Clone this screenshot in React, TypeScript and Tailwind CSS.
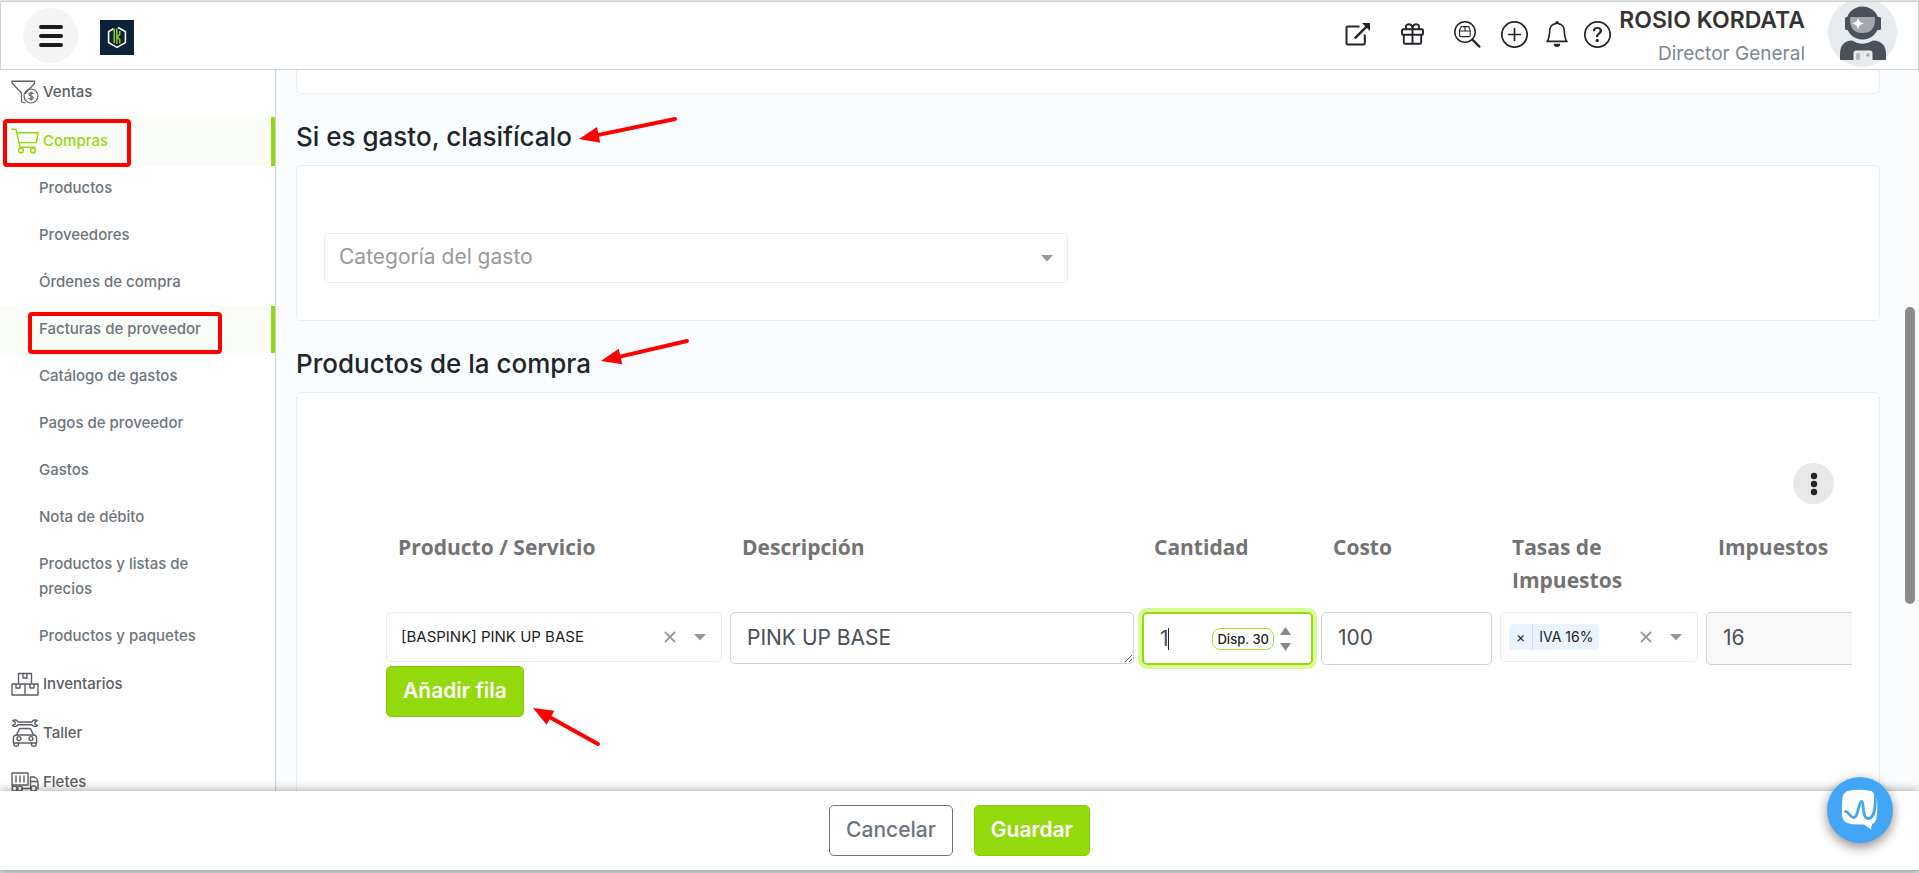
import { useState } from 'react';
import type { ReactNode } from 'react';
import { BsBell, BsPlusCircle, BsQuestionCircle } from 'react-icons/bs';

const SUB_ITEMS = [
  'Productos',
  'Proveedores',
  'Órdenes de compra',
  'Facturas de proveedor',
  'Catálogo de gastos',
  'Pagos de proveedor',
  'Gastos',
  'Nota de débito',
  'Productos y listas de precios',
  'Productos y paquetes',
];

function VentasIcon() {
  return (
    <svg width="28" height="24" viewBox="0 0 28 24" fill="none" stroke="currentColor" strokeWidth="1.2" strokeLinejoin="round" strokeLinecap="round">
      <path d="M14 13.5 L23.5 3.5 V1 H1 V3 L10.5 13 V22 L14 23" />
      <path d="M1 1.5 H23.5" />
      <circle cx="20" cy="16" r="7" />
      <path d="M22 13.6 C21 12.6 18 12.6 18 14.4 C18 16.3 22.2 15.6 22.2 17.7 C22.2 19.4 19 19.5 17.8 18.4 M20 11.8 V20.2" />
    </svg>
  );
}

function CartIcon() {
  return (
    <svg width="28" height="26" viewBox="0 0 28 26" fill="none" stroke="currentColor" strokeWidth="1.4" strokeLinejoin="round" strokeLinecap="round">
      <path d="M0.8 1.2 H5 L9 19.2 H24" />
      <path d="M5.8 4.8 H27 L25.4 14.6 H8" />
      <circle cx="10" cy="22.4" r="2.4" />
      <circle cx="22" cy="22.4" r="2.4" />
    </svg>
  );
}

function BoxesIcon() {
  return (
    <svg width="28" height="24" viewBox="0 0 28 24" fill="none" stroke="currentColor" strokeWidth="1.4" strokeLinejoin="round">
      <path d="M7.5 11.5 V1.5 H20.5 V11.5" />
      <path d="M1 12 H27 V23 H1 Z M14 12 V23" />
      <path d="M12 1.5 V6 H16 V1.5 M5 12 V16 H9 V12 M19 12 V16 H23 V12" />
    </svg>
  );
}

function TallerIcon() {
  return (
    <svg width="28" height="28" viewBox="0 0 28 28" fill="none" stroke="currentColor" strokeWidth="1.4" strokeLinejoin="round" strokeLinecap="round">
      <path d="M7 3 H21 C22 0.8 24.6 0.4 26.2 1.6 L23.8 3.4 V5 L26.4 6.4 C24.8 8 22 7.6 21 5.8 H7 C6 7.6 3.2 8 1.6 6.4 L4.2 5 V3.4 L1.8 1.6 C3.4 0.4 6 0.8 7 3 Z" />
      <path d="M5.5 16 L8 10.6 C8.4 9.8 9 9.5 9.8 9.5 H18.2 C19 9.5 19.6 9.8 20 10.6 L22.5 16" />
      <path d="M5.5 16 H22.5 C24.4 16 25.6 17.4 25.6 19.4 V24 H2.4 V19.4 C2.4 17.4 3.6 16 5.5 16 Z" />
      <path d="M3 24 V26 C3 27.6 7.4 27.6 7.4 26 V24 M20.6 24 V26 C20.6 27.6 25 27.6 25 26 V24" />
      <circle cx="8" cy="19.6" r="2" />
      <circle cx="20" cy="19.6" r="2" />
    </svg>
  );
}

function TruckIcon() {
  return (
    <svg width="28" height="20" viewBox="0 0 28 20" fill="none" stroke="currentColor" strokeWidth="1.4" strokeLinejoin="round" strokeLinecap="round">
      <path d="M1 14 V1 H17 V13 H1" />
      <path d="M5 4 V10 M9 4 V10 M13 4 V10" />
      <path d="M19.5 16.5 V5 H23 C25.5 5.5 27 8.5 27 11 V16.5 H25.5 M19.5 9.5 H26.4 M10.5 16.5 H19.5" />
      <circle cx="3.6" cy="16.6" r="2.5" />
      <circle cx="9" cy="16.6" r="2.5" />
      <circle cx="22.6" cy="16.6" r="2.7" />
    </svg>
  );
}

function ExternalIcon() {
  return (
    <svg width="26" height="24" viewBox="0 0 26 24" fill="none" stroke="currentColor" strokeWidth="2">
      <path d="M14.5 4.5 H2.8 Q1.5 4.5 1.5 5.8 V21 Q1.5 22.5 2.8 22.5 H18.5 Q19.8 22.5 19.8 21 V12.5" />
      <path d="M9.8 16.4 L23 3.2" strokeWidth="2.4" />
      <path d="M17 1 H25 V9 Z" fill="currentColor" stroke="none" />
    </svg>
  );
}

function GiftIcon() {
  return (
    <svg width="23" height="22" viewBox="0 0 23 22" fill="none" stroke="currentColor" strokeWidth="1.9" strokeLinejoin="round">
      <rect x="1" y="6.2" width="21" height="5.6" rx="1" />
      <path d="M2.8 11.8 V19.4 Q2.800 20.800 4.200 20.800 H18.800 Q20.200 20.800 20.200 19.400 V11.800" />
      <path d="M11.500 6.200 V20.800" />
      <path d="M11.500 6 C11.500 3 9.800 1.200 7.600 1.200 C4.600 1.200 4 4.400 6 6 M11.500 6 C11.500 3 13.200 1.200 15.400 1.200 C18.400 1.200 19 4.400 17 6" />
    </svg>
  );
}

function ProductSearchIcon() {
  return (
    <svg width="28" height="28" viewBox="0 0 28 28" fill="none" stroke="currentColor" strokeWidth="1.5" strokeLinecap="round">
      <circle cx="12" cy="12" r="10.2" />
      <path d="M19.4 19.6 L26.4 26.6" strokeWidth="2.2" />
      <path d="M6.6 10 L8.4 6.6 H15.6 L17.2 10 V15.2 Q17.2 16.6 15.8 16.6 H8 Q6.6 16.6 6.6 15.2 Z M6.6 11 H17.2 M12 6.6 V11" strokeWidth="1.1" />
    </svg>
  );
}

function Logo() {
  return (
    <svg width="34" height="35" viewBox="0 0 34 35" className="mt-1 ml-[22px]" role="img" aria-label="Kordata">
      <rect width="34" height="35" fill="#0b2239" />
      <path d="M13.500 8.800 L8.600 11.600 V22.600 L17 27.400 L25.400 22.600 V11.600 L18 7.500" fill="none" stroke="#fff" strokeWidth="1.6" strokeLinejoin="round" />
      <path d="M14.200 8.500 V23 M16.800 8.500 V24 M17 17 L19.800 14.400 V11 M17 17 L19.800 19.400 V23.400" fill="none" stroke="#8fce1c" strokeWidth="1.5" />
    </svg>
  );
}

function Avatar() {
  return (
    <svg width="69" height="65" viewBox="0 0 69 65" className="ml-[23px] self-start" role="img" aria-label="Avatar">
      <circle cx="34.5" cy="30.5" r="34.5" fill="#e7ebee" />
      <circle cx="34.5" cy="21" r="16.5" fill="#49515a" />
      <rect x="17" y="15" width="36" height="13" rx="1.5" fill="#49515a" />
      <path d="M23 15 H46 Q47 15 47 17 Q47 31 34.5 31 Q22 31 22 17 Q22 15 23 15 Z" fill="#a3a8ad" />
      <path d="M30 15.5 Q30.6 20.4 36 21.5 Q30.6 22.2 30 27.5 Q29.4 22.2 24 21.5 Q29.4 20.4 30 15.5 Z" fill="#fff" />
      <path d="M12 58 V52 Q12 39 24 38.5 Q34.5 45 45 38.5 Q58 39 58 52 V58 Z" fill="#49515a" />
      <path d="M25.5 58 V51 Q25.5 48.5 28 48.5 H42 Q44.5 48.5 44.5 51 V58 Z" fill="#e7ebee" />
      <rect x="28" y="51" width="4" height="7" rx="1.5" fill="#b4b9bd" />
      <circle cx="40" cy="53" r="1.8" fill="#a3a8ad" />
    </svg>
  );
}

function Caret() {
  return (
    <svg width="12" height="7" viewBox="0 0 12 7" className="pointer-events-none shrink-0">
      <path d="M0 0 H12 L6 6.5 Z" fill="#999" />
    </svg>
  );
}

function ClearIcon() {
  return (
    <svg width="12" height="12" viewBox="0 0 12 12" stroke="#999" strokeWidth="1.8">
      <path d="M1 1 L11 11 M11 1 L1 11" />
    </svg>
  );
}

// Hand drawn arrow that points at an element of the form
function Arrow({ className, width, height, from, to }: {
  className: string;
  width: number;
  height: number;
  from: [number, number];
  to: [number, number];
}) {
  const angle = Math.atan2(to[1] - from[1], to[0] - from[0]);
  const at = (d: number, side: number) => {
    const x = to[0] - Math.cos(angle) * d - Math.sin(angle) * side;
    const y = to[1] - Math.sin(angle) * d + Math.cos(angle) * side;
    return `${x},${y}`;
  };
  const [bx, by] = at(14, 0).split(',');

  return (
    <svg className={`absolute pointer-events-none z-10 ${className}`} width={width} height={height} fill="#f00" aria-hidden="true">
      <line x1={from[0]} y1={from[1]} x2={bx} y2={by} stroke="#f00" strokeWidth="4" strokeLinecap="round" />
      <polygon points={`${to[0]},${to[1]} ${at(20, 8)} ${at(20, -8)}`} />
    </svg>
  );
}

function NavItem({ icon, label, active }: { icon: ReactNode; label: string; active?: boolean }) {
  return (
    <a
      href="#"
      className={`relative flex h-[49px] items-start pt-[11px] pl-[11px] leading-[25px] font-medium ${
        active ? 'bg-[#fafdf7] border-r-4 border-[#94d90c] text-[#94d90c]' : 'text-[#5b5e63]'
      }`}
    >
      <span className="flex h-[26px] w-8 shrink-0 items-center">{icon}</span>
      {label}
      {active && <span className="absolute top-0.5 left-[3px] h-12 w-32 rounded-sm border-4 border-[#f00]" />}
    </a>
  );
}

function Sidebar() {
  return (
    <nav className="w-[276px] shrink-0 overflow-hidden border-r border-[#d0d3d6] bg-white text-[15px]">
      <div className="-mt-0.5">
        <NavItem icon={<VentasIcon />} label="Ventas" />
        <NavItem icon={<CartIcon />} label="Compras" active />
        <ul className="-mt-px">
          {SUB_ITEMS.map((item) => {
            const active = item === 'Facturas de proveedor';
            return (
              <li key={item} className={`relative ${active ? 'bg-[#fafdf7] border-r-4 border-[#94d90c]' : ''}`}>
                <a href="#" className="block max-w-[240px] pt-2.5 pr-6 pb-3 pl-[39px] leading-[25px] font-medium text-[#6c757d]">
                  {item}
                </a>
                {active && <span className="absolute top-1.5 left-7 h-[42px] w-[194px] rounded-sm border-4 border-[#f00]" />}
              </li>
            );
          })}
        </ul>
        <NavItem icon={<BoxesIcon />} label="Inventarios" />
        <NavItem icon={<TallerIcon />} label="Taller" />
        <NavItem icon={<TruckIcon />} label="Fletes" />
      </div>
    </nav>
  );
}

function Header() {
  return (
    <header className="flex h-[69px] shrink-0 items-center border border-[#d0d0d0] bg-white pr-[21px] pl-[22px]">
      <button type="button" aria-label="Menú" className="flex size-[55px] flex-col items-center justify-center gap-[5px] rounded-full bg-[#f4f4f4]">
        <span className="h-1 w-6 rounded-xs bg-[#1a1a1a]" />
        <span className="h-1 w-6 rounded-xs bg-[#1a1a1a]" />
        <span className="h-1 w-6 rounded-xs bg-[#1a1a1a]" />
      </button>
      <Logo />
      <div className="ml-auto flex h-16 items-center self-start text-[#212529]">
        <button type="button" aria-label="Abrir" className="mr-[30px]"><ExternalIcon /></button>
        <button type="button" aria-label="Novedades" className="mr-[29px]"><GiftIcon /></button>
        <button type="button" aria-label="Buscar producto" className="mr-5"><ProductSearchIcon /></button>
        <button type="button" aria-label="Agregar" className="mr-4"><BsPlusCircle size={27} /></button>
        <button type="button" aria-label="Notificaciones" className="mr-3.5"><BsBell size={26} /></button>
        <button type="button" aria-label="Ayuda"><BsQuestionCircle size={27} /></button>
      </div>
      <div className="ml-2 flex flex-col items-end self-start">
        <span className="text-[23px] leading-9 font-semibold text-[#333]">ROSIO KORDATA</span>
        <span className="text-[19px] leading-8 text-[#7b8794]">Director General</span>
      </div>
      <Avatar />
    </header>
  );
}

function ProductTable() {
  const [description, setDescription] = useState('PINK UP BASE');
  const [quantity, setQuantity] = useState('1');
  const [cost, setCost] = useState('100');

  return (
    <table className="w-[1499px] table-fixed border-collapse">
      <colgroup>
        <col className="w-[344px]" />
        <col className="w-[412px]" />
        <col className="w-[179px]" />
        <col className="w-[179px]" />
        <col className="w-[206px]" />
        <col className="w-[179px]" />
      </colgroup>
      <thead>
        <tr className="text-left align-top font-['Open_Sans',sans-serif] text-[21px] leading-[33px] text-[#737373]">
          <th className="h-[77px] pl-4 font-bold">Producto / Servicio</th>
          <th className="pl-4 font-bold">Descripción</th>
          <th className="pl-4 font-bold">Cantidad</th>
          <th className="pl-4 font-bold">Costo</th>
          <th className="pr-12 pl-4 font-bold">Tasas de Impuestos</th>
          <th className="pl-4 font-bold">Impuestos</th>
        </tr>
      </thead>
      <tbody>
        <tr className="align-top text-[21px] text-[#495057]">
          <td className="px-1 pt-1">
            <div className="flex h-[50px] items-center rounded-[5px] border border-[#e5effa] pr-[15px]">
              <select aria-label="Producto / Servicio" className="h-full min-w-0 flex-1 appearance-none pl-3.5 text-[15px] text-[#222] outline-none">
                <option>[BASPINK] PINK UP BASE</option>
              </select>
              <button type="button" aria-label="Quitar producto" className="mr-[18px]"><ClearIcon /></button>
              <Caret />
            </div>
          </td>
          <td className="px-1 pt-1">
            <textarea
              aria-label="Descripción"
              rows={1}
              value={description}
              onChange={(e) => setDescription(e.target.value)}
              className="block h-[52px] w-full resize overflow-hidden rounded-[5px] border border-[#ced4da] px-4 pt-2.5 leading-[30px] outline-none"
            />
          </td>
          <td className="px-1 pt-1">
            <div className="relative flex h-[53px] items-center rounded-[5px] border-2 border-[#94d90c] pr-5 shadow-[0_0_0_4px_#dafa98]">
              <input
                aria-label="Cantidad"
                type="text"
                inputMode="numeric"
                value={quantity}
                onChange={(e) => setQuantity(e.target.value)}
                className="h-full w-0 min-w-0 flex-1 pl-4 outline-none"
              />
              <span className="absolute left-6 h-[22px] w-px bg-[#212529]" />
              <span className="rounded-lg border border-[#a6e22e] px-1 text-[13px] leading-5 font-medium text-[#222]">Disp. 30</span>
              <span className="ml-1.5 flex flex-col gap-2">
                <button type="button" aria-label="Más">
                  <svg width="11" height="8" viewBox="0 0 11 8" className="block"><path d="M5.5 0 L11 8 H0 Z" fill="#8a8a8a" /></svg>
                </button>
                <button type="button" aria-label="Menos">
                  <svg width="11" height="8" viewBox="0 0 11 8" className="block"><path d="M0 0 H11 L5.5 8 Z" fill="#8a8a8a" /></svg>
                </button>
              </span>
            </div>
          </td>
          <td className="px-1 pt-1">
            <input
              aria-label="Costo"
              type="text"
              value={cost}
              onChange={(e) => setCost(e.target.value)}
              className="block h-[53px] w-full rounded-[5px] border border-[#ced4da] px-4 pb-0.5 outline-none"
            />
          </td>
          <td className="px-1 pt-1">
            <div className="flex h-[50px] items-center rounded-[5px] border border-[#e5effa] pr-[15px] pl-2">
              <span className="flex h-[26px] items-center rounded-sm bg-[#e8f3ff] text-sm leading-[26px] text-[#222]">
                <button type="button" aria-label="Quitar IVA 16%" className="h-full border-r border-[#c9e0f5] px-[7px]">×</button>
                <span className="px-1.5">IVA 16%</span>
              </span>
              <button type="button" aria-label="Quitar tasas" className="mr-[18px] ml-auto"><ClearIcon /></button>
              <button type="button" aria-label="Elegir tasas"><Caret /></button>
            </div>
          </td>
          <td className="px-1 pt-1">
            <input
              aria-label="Impuestos"
              type="text"
              readOnly
              value="16"
              className="block h-[53px] w-full rounded-[5px] border border-[#ced4da] bg-[#f8f8f8] px-4 pb-0.5 outline-none"
            />
          </td>
        </tr>
      </tbody>
    </table>
  );
}

export default function App() {
  return (
    <div className="flex h-screen flex-col overflow-hidden bg-[#dbe6e0] pt-px font-[Inter,sans-serif]">
      <Header />

      <div className="flex min-h-0 flex-1">
        <Sidebar />

        <main className="min-w-0 flex-1 overflow-hidden bg-[#fafdff] pr-[23px] pl-5">
          <div className="h-6 rounded-b-[5px] border border-t-0 border-[#e5effa] bg-white" />

          <section className="relative">
            <h2 className="pt-[25px] pb-2.5 text-[26px] leading-9 font-medium text-[#212529]">Si es gasto, clasifícalo</h2>
            <Arrow className="top-5 left-[280px]" width={106} height={36} from={[99, 5]} to={[3, 25]} />
            <div className="rounded-[5px] border border-[#e5effa] bg-white px-[27px] pt-[67px] pb-[37px]">
              <div className="flex h-[50px] w-[calc(50%-20px)] items-center rounded-[5px] border border-[#e5effa] pr-3.5">
                <select aria-label="Categoría del gasto" className="h-full min-w-0 flex-1 appearance-none pb-0.5 pl-3.5 text-[21px] text-[#999] outline-none">
                  <option>Categoría del gasto</option>
                </select>
                <Caret />
              </div>
            </div>
          </section>

          <section className="relative">
            <h2 className="pt-[25px] pb-2.5 text-[26px] leading-9 font-medium text-[#212529]">Productos de la compra</h2>
            <Arrow className="top-[15px] left-[302px]" width={96} height={36} from={[89, 5]} to={[3, 25]} />
            <div className="h-[500px] rounded-[5px] border border-[#e5effa] bg-white pt-[70px] pr-[27px] pl-[85px]">
              <div className="flex justify-end pr-[18px]">
                <button type="button" aria-label="Opciones" className="flex size-[41px] items-center justify-center rounded-full bg-[#e8e8e8] text-[#212529]">
                  <svg width="8" height="24" viewBox="0 0 8 24" fill="currentColor">
                    <circle cx="4" cy="4" r="3.2" />
                    <circle cx="4" cy="12" r="3.2" />
                    <circle cx="4" cy="20" r="3.2" />
                  </svg>
                </button>
              </div>
              <div className="relative mt-[27px] overflow-hidden pb-12">
                <ProductTable />
                <button type="button" className="mt-px ml-1 block h-[51px] rounded-[5px] border border-[#86c70b] bg-[#94d90c] px-4 pb-0.5 text-[21px] font-semibold text-white">
                  Añadir fila
                </button>
                <Arrow className="bottom-4 left-[148px]" width={76} height={46} from={[68, 41]} to={[3, 5]} />
              </div>
            </div>
          </section>
        </main>

        <div className="w-4 shrink-0 bg-[#fcfcfc]">
          <div className="mt-[237px] ml-0.5 h-[297px] w-2.5 rounded-full bg-[#8b8b8b]" />
        </div>
      </div>

      <footer className="relative z-20 mb-0.5 flex h-20 shrink-0 items-start justify-center gap-[21px] border-b border-[#a9b8c6] bg-white pt-3.5 shadow-[0_0_10px_rgba(0,0,0,0.4)]">
        <button type="button" className="h-[51px] rounded-[5px] border border-[#6c757d] px-4 pb-0.5 text-[21px] font-medium text-[#6c757d]">Cancelar</button>
        <button type="button" className="h-[51px] rounded-[5px] border border-[#8bcf0b] bg-[#94d90c] px-4 pb-0.5 text-[21px] font-semibold text-white">Guardar</button>

        <button type="button" aria-label="Chat" className="absolute -top-3.5 right-[26px] size-[66px] rounded-full bg-[#42a5f5] shadow-[0_4px_12px_rgba(0,0,0,0.45)]">
          <svg width="66" height="66" viewBox="0 0 66 66" fill="none">
            <path d="M23 13.5 Q33 12 44 14 Q47.5 15 47.5 21 L50 21.5 Q51 36 49 43 Q48 46 45 47 L44 52.5 L37 47.5 Q27 48 20 46 Q15.5 44 15 38 Q14.5 28 15.5 20 Q16.5 14.5 23 13.5 Z" fill="#fff" />
            <path d="M18.5 34.5 C21.5 34 23 40.5 26.5 40.5 C31.5 40.5 31.5 24.5 34.5 24.5 C37.5 24.5 34.5 41.5 41 41.5 C47.5 41.5 48.5 31 48.5 18" stroke="#42a5f5" strokeWidth="2.8" strokeLinecap="round" />
          </svg>
        </button>
      </footer>
    </div>
  );
}
